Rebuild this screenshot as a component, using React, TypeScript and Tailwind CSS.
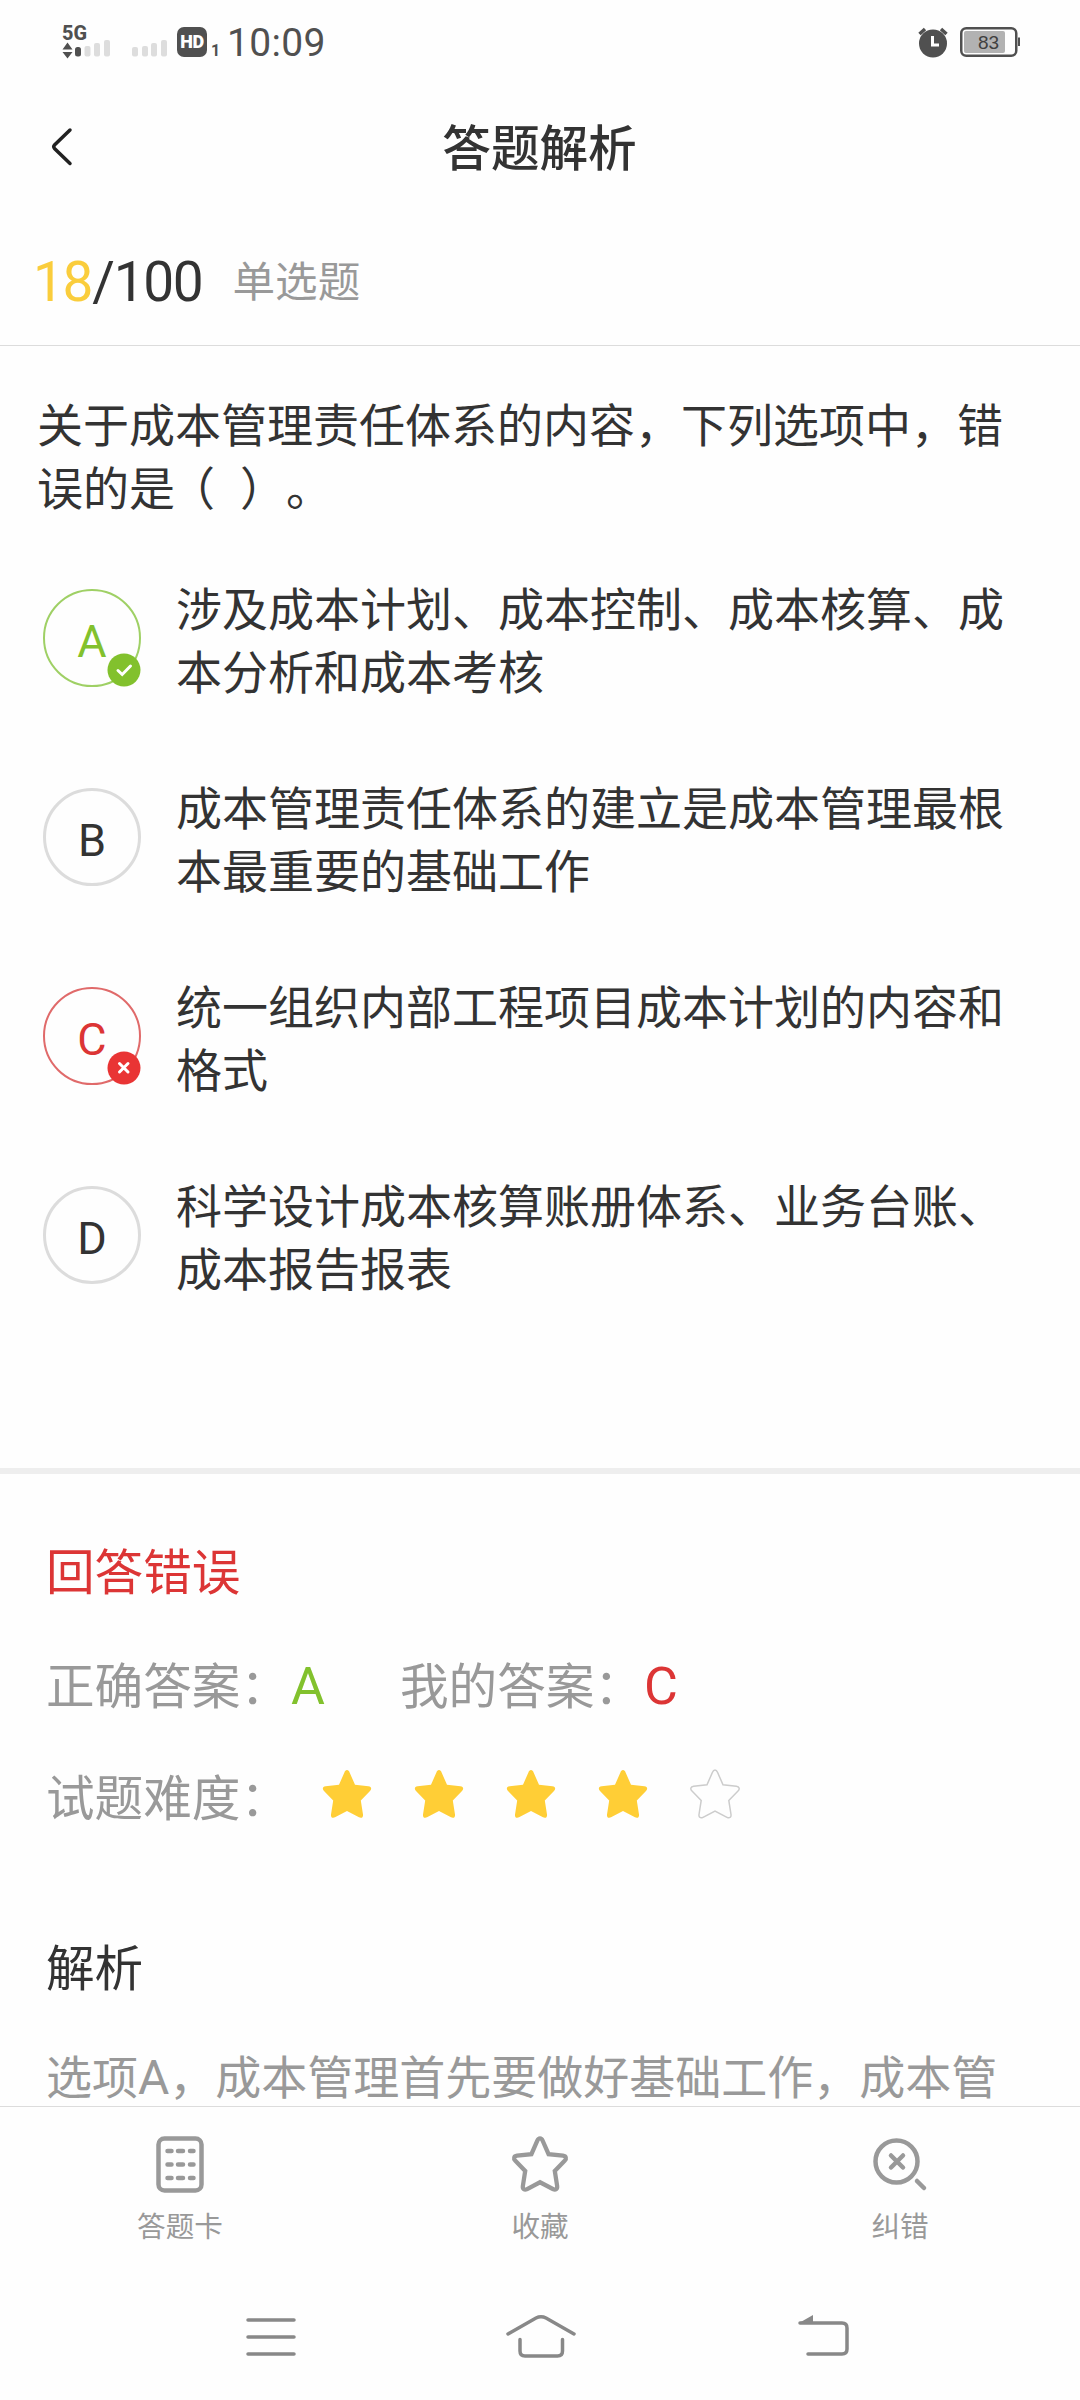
import clsx from "clsx";

type Status = "correct" | "wrong" | "none";

const options: { key: string; text: string; status: Status }[] = [
  {
    key: "A",
    text: "涉及成本计划、成本控制、成本核算、成本分析和成本考核",
    status: "correct",
  },
  {
    key: "B",
    text: "成本管理责任体系的建立是成本管理最根本最重要的基础工作",
    status: "none",
  },
  {
    key: "C",
    text: "统一组织内部工程项目成本计划的内容和格式",
    status: "wrong",
  },
  {
    key: "D",
    text: "科学设计成本核算账册体系、业务台账、成本报告报表",
    status: "none",
  },
];

const STAR =
  "M25 1 C26.3 1 27 2 27.5 3.2 L33 15.8 L46.4 17.2 C49.4 17.6 50 20 48 22 L38.8 31.4 L41 45.5 C41.4 48.5 39.4 49.5 37 48.3 L25 42 L13 48.3 C10.6 49.5 8.6 48.5 9 45.5 L11.2 31.4 L2 22 C0 20 0.6 17.6 3.6 17.2 L17 15.8 L22.5 3.2 C23 2 23.7 1 25 1 Z";

function StatusBar() {
  return (
    <div className="flex h-[84px] shrink-0 justify-between pl-[62px] pr-[59px] pt-[22px] text-[#505050]">
      <div className="flex">
        <svg width="108" height="40" viewBox="62 22 108 40" fill="#505050">
          <text
            x="62"
            y="40"
            fontFamily="Roboto, sans-serif"
            fontSize="20.5"
            fontWeight="800"
            textLength="25"
            lengthAdjust="spacingAndGlyphs"
          >
            5G
          </text>
          <path d="M67.5 42.5 L72.5 49.5 H62.5 Z M62.5 52 H72.5 L67.5 58.5 Z" />
          <rect x="75" y="47" width="6" height="9.5" rx="2.5" />
          <g fill="#dddddd">
            <rect x="84.5" y="46" width="6" height="10.5" rx="2" />
            <rect x="94" y="43" width="6" height="13.5" rx="2" />
            <rect x="104" y="40" width="6" height="16.5" rx="2" />
            <rect x="132" y="47" width="6" height="9.5" rx="2" />
            <rect x="142" y="46" width="6" height="10.5" rx="2" />
            <rect x="151" y="43" width="6" height="13.5" rx="2" />
            <rect x="161" y="40" width="6" height="16.5" rx="2" />
          </g>
        </svg>
        <div className="ml-[7px] mt-[5px] flex size-[30px] items-center justify-center rounded-[7px] bg-[#505050] font-[Roboto,sans-serif] text-[18px] leading-none font-black tracking-[-0.5px] text-white">
          HD
        </div>
        <span className="ml-[4px] mt-[20px] w-[8px] font-[Roboto,sans-serif] text-[16px] leading-[18px] font-bold">
          1
        </span>
        <span className="ml-[8px] mt-px font-[Roboto,sans-serif] text-[39px] leading-[40px] tracking-[0.3px]">
          10:09
        </span>
      </div>
      <svg width="104" height="40" viewBox="917 22 104 40" fill="none">
        <circle cx="933" cy="43.5" r="14" fill="#505050" />
        <path
          d="M919.5 34 L925 29 M946.5 34 L941 29"
          stroke="#505050"
          strokeWidth="3.5"
        />
        <path d="M932.5 36 V45 H939" stroke="#fff" strokeWidth="3" />
        <rect
          x="961.25"
          y="28.25"
          width="55"
          height="27.5"
          rx="5"
          stroke="#505050"
          strokeWidth="2.5"
        />
        <rect x="964" y="31" width="41" height="22" rx="2" fill="#b2b2b2" />
        <path d="M1019 37.5 V46" stroke="#505050" strokeWidth="2" />
        <text
          x="978"
          y="49"
          fontFamily="Liberation Sans, sans-serif"
          fontSize="19"
          fill="#404040"
        >
          83
        </text>
      </svg>
    </div>
  );
}

function Header() {
  return (
    <header className="grid h-[126px] shrink-0 grid-cols-[1fr_auto_1fr] items-center pr-[49px] pl-[48px]">
      <svg width="28" height="44" viewBox="48 124 28 44" fill="none">
        <path
          d="M70 129 L54.5 144 Q53 145.7 54.5 147.5 L70 162.5"
          stroke="#222"
          strokeWidth="3.5"
          strokeLinecap="round"
        />
      </svg>
      <h1 className="text-[48.6px] leading-[72px] font-medium">答题解析</h1>
    </header>
  );
}

function OptionBadge({ label, status }: { label: string; status: Status }) {
  return (
    <div
      className={clsx(
        "relative mt-[12px] flex size-[98px] shrink-0 items-center justify-center rounded-full pt-[6px] font-[Roboto,sans-serif] text-[45px] leading-none",
        status === "correct" && "border-2 border-[#9fd065] text-[#82c12d]",
        status === "wrong" && "border-2 border-[#e06a6a] text-[#dc3535]",
        status === "none" && "border-[3px] border-[#dcdcdc]"
      )}
    >
      {label}
      {status !== "none" && (
        <svg
          className="absolute -right-0.5 -bottom-0.5"
          width="34"
          height="34"
          viewBox="0 0 34 34"
          fill="none"
        >
          <circle
            cx="17"
            cy="17"
            r="16.5"
            fill={status === "correct" ? "#82c12d" : "#e93434"}
          />
          <path
            d={
              status === "correct"
                ? "M11 17.5 L15.2 21.5 L23.5 13"
                : "M12.5 12.5 L21 21 M21 12.5 L12.5 21"
            }
            stroke="#fff"
            strokeWidth="3"
            strokeLinecap="round"
          />
        </svg>
      )}
    </div>
  );
}

function TabItem({ label, children }: { label: string; children: React.ReactNode }) {
  return (
    <button className="flex flex-1 flex-col items-center pt-[26px]">
      {children}
      <span className="mt-[13px] text-[28.6px] leading-[40px]">{label}</span>
    </button>
  );
}

export default function App() {
  return (
    <div className="flex h-[2400px] w-[1080px] flex-col overflow-hidden bg-[#fefefe] font-['Noto_Sans','Noto_Sans_CJK_SC',sans-serif] text-[#333] [text-spacing-trim:space-all]">
      <StatusBar />
      <Header />

      {/* Progress */}
      <div className="flex h-[136px] shrink-0 items-center border-b border-[#dcdcdc] pt-[4px] pl-[33px]">
        <span className="mt-[4px] font-[Roboto,sans-serif] text-[55px] leading-[72px] tracking-[-1.3px]">
          <span className="text-[#facd3c]">18</span>/100
        </span>
        <span className="ml-[30px] text-[42.6px] leading-[60px] text-[#999]">单选题</span>
      </div>

      <main className="h-[1760px] shrink-0 overflow-hidden">
        {/* Question */}
        <section className="h-[1122px] pt-[47px]">
          <p className="ml-[37px] w-[974px] text-[46px] leading-[63px]">
            关于成本管理责任体系的内容，下列选项中，错误的
            <span className="tracking-[-6px]">是</span>
            <span className="tracking-[13px]">（</span> ）。
          </p>
          <ul className="mt-[58px] flex flex-col gap-[73px] pl-[43px]">
            {options.map((o) => (
              <li key={o.key} className="flex h-[126px] gap-[35px]">
                <OptionBadge label={o.key} status={o.status} />
                <p className="w-[836px] text-[46px] leading-[63px]">{o.text}</p>
              </li>
            ))}
          </ul>
        </section>

        {/* Result */}
        <section className="border-t-[6px] border-[#eee] pt-[61px] pl-[46px] text-[48.6px] leading-[72px] text-[#999]">
          <h2 className="text-[#dc3535]">回答错误</h2>
          <div className="mt-[42px] flex">
            <span>正确答案：</span>
            <span className="mt-[2px] ml-[2px] w-[34px] font-[Roboto,sans-serif] text-[52px] leading-[72px] text-[#82c12d]">
              A
            </span>
            <span className="ml-[75px]">我的答案：</span>
            <span className="mt-[2px] ml-[1px] font-[Roboto,sans-serif] text-[52px] leading-[72px] text-[#dc3535]">
              C
            </span>
          </div>
          <div className="mt-[38px] flex">
            <span>试题难度：</span>
            <div className="mt-[8px] ml-[33px] flex gap-[42px]">
              {[1, 2, 3, 4, 5].map((n) => (
                <svg key={n} width="50" height="50" viewBox="0 0 50 50">
                  <path
                    d={STAR}
                    fill={n <= 4 ? "#ffce36" : "none"}
                    stroke={n <= 4 ? "none" : "#cccccc"}
                    strokeWidth="1.5"
                  />
                </svg>
              ))}
            </div>
          </div>
          <h2 className="mt-[98px] text-[#333]">解析</h2>
          <p className="mt-[45px] text-[46px] leading-[57px] whitespace-nowrap">
            选项<span className="font-[Roboto,sans-serif] text-[48px]">A</span>
            ，成本管理首先要做好基础工作，成本管
          </p>
        </section>
      </main>

      {/* Tab bar */}
      <div className="flex h-[164px] shrink-0 border-t border-[#dcdcdc] text-[#999]">
        <TabItem label="答题卡">
          <svg width="60" height="60" viewBox="0 0 60 60" fill="none" stroke="#999">
            <rect x="8.5" y="5.5" width="43" height="52" rx="6" strokeWidth="4.5" />
            <path
              d="M17.5 18 H21.5 M28 18 H33 M40 18 H43.5 M17.5 31.5 H21.5 M28 31.5 H33 M40 31.5 H43.5 M17.5 45 H21.5 M28 45 H33 M40 45 H43.5"
              strokeWidth="4.5"
              strokeLinecap="round"
            />
          </svg>
        </TabItem>
        <TabItem label="收藏">
          <svg width="60" height="60" viewBox="-3 -4 56 56" fill="none">
            <path d={STAR} stroke="#999" strokeWidth="4" />
          </svg>
        </TabItem>
        <TabItem label="纠错">
          <svg
            width="60"
            height="60"
            viewBox="0 0 60 60"
            fill="none"
            stroke="#999"
            strokeWidth="4.5"
            strokeLinecap="round"
          >
            <circle cx="26.5" cy="28.5" r="21" />
            <path d="M21 22.5 L33 34.5 M33 22.5 L21 34.5" />
            <path d="M47 48 L54 55" />
          </svg>
        </TabItem>
      </div>

      {/* System navigation */}
      <nav className="flex h-[130px] shrink-0 items-start pt-[38px] pl-[242px]">
        <svg
          width="58"
          height="56"
          viewBox="242 2308 58 56"
          stroke="#888"
          strokeWidth="3.5"
          strokeLinecap="round"
        >
          <path d="M248 2320 H294 M248 2337 H294 M248 2354 H294" />
        </svg>
        <svg
          className="ml-[202px]"
          width="78"
          height="56"
          viewBox="502 2308 78 56"
          fill="none"
          stroke="#888"
          strokeWidth="3.5"
          strokeLinecap="round"
        >
          <path d="M508 2334 L536 2318 Q541 2315.5 546 2318 L574 2334" />
          <path d="M520 2339.5 V2351 Q520 2356 525 2356 H557.5 Q562.5 2356 562.5 2351 V2339.5" />
        </svg>
        <svg
          className="ml-[215px]"
          width="58"
          height="56"
          viewBox="795 2308 58 56"
          fill="none"
          stroke="#888"
          strokeWidth="3.5"
          strokeLinecap="round"
        >
          <path d="M800 2323 H842 Q847 2323 847 2328 V2349 Q847 2354 842 2354 H808" />
          <path d="M813 2315 V2323 H799 Z" fill="#888" stroke="none" />
        </svg>
      </nav>
    </div>
  );
}
